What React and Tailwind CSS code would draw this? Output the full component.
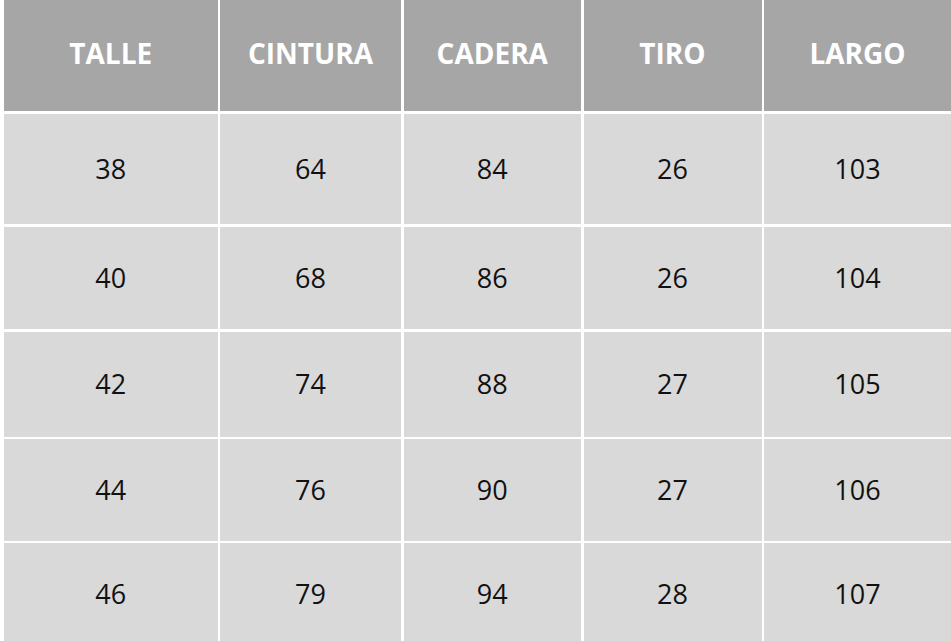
const head = ['TALLE', 'CINTURA', 'CADERA', 'TIRO', 'LARGO']
const rows = [
  ['38', '64', '84', '26', '103'],
  ['40', '68', '86', '26', '104'],
  ['42', '74', '88', '27', '105'],
  ['44', '76', '90', '27', '106'],
  ['46', '79', '94', '28', '107'],
]

export default function App() {
  return (
    <div className="w-[951px] h-[641px] overflow-hidden bg-white pl-[4px]" style={{ fontFamily: '"Open Sans", "Liberation Sans", sans-serif' }}>
      <div className="grid grid-cols-[213.5px_181px_177.5px_178px_1fr] grid-rows-[111px_110.5px_102.5px_105px_101.5px_103px] gap-[2.5px]">
        {head.map((h) => (
          <div key={h} className="bg-[#a6a6a6] text-white font-bold text-[28px] flex items-center justify-center pb-[5px]">{h}</div>
        ))}
        {rows.map((r, i) =>
          r.map((c, j) => (
            <div key={`${i}-${j}`} className="bg-[#d9d9d9] text-[#111] text-[27px] flex items-center justify-center">{c}</div>
          ))
        )}
      </div>
    </div>
  )
}
